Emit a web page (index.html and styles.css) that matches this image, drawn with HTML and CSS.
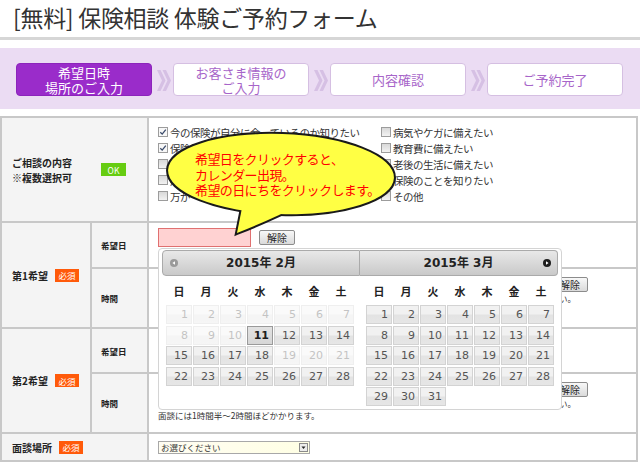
FILE: index.html
```html
<!DOCTYPE html>
<html lang="ja">
<head>
<meta charset="utf-8">
<title>保険相談 体験ご予約フォーム</title>
<link rel="stylesheet" href="styles.css">
</head>
<body>
<div class="page">
  <h1 class="title">[無料] 保険相談 体験ご予約フォーム</h1>

  <nav class="steps">
    <div class="step active">希望日時<br>場所のご入力</div>
    <svg class="arrow" viewBox="0 0 21 33"><path d="M5 7h3.5l5 10.5-5 10.5H5l5-10.5z M10.5 7H14l5 10.5-5 10.5h-3.5l5-10.5z" fill="#d6c0e4"/></svg>
    <div class="step">お客さま情報の<br>ご入力</div>
    <svg class="arrow" viewBox="0 0 21 33"><path d="M5 7h3.5l5 10.5-5 10.5H5l5-10.5z M10.5 7H14l5 10.5-5 10.5h-3.5l5-10.5z" fill="#d6c0e4"/></svg>
    <div class="step">内容確認</div>
    <svg class="arrow" viewBox="0 0 21 33"><path d="M5 7h3.5l5 10.5-5 10.5H5l5-10.5z M10.5 7H14l5 10.5-5 10.5h-3.5l5-10.5z" fill="#d6c0e4"/></svg>
    <div class="step">ご予約完了</div>
  </nav>

  <div class="form">
    <div class="lab wide">
      <div class="lab-text">ご相談の内容<br>※複数選択可</div>
      <span class="badge ok">OK</span>
    </div>
    <div class="cell checks">
      <label class="chk"><span class="box on"><svg viewBox="0 0 8 8"><path d="M1.3 4.2l1.9 1.9L6.8 1.6" fill="none" stroke="#3a4a6a" stroke-width="1.3"/></svg></span>今の保険が自分に合っているのか知りたい</label>
      <label class="chk"><span class="box on"><svg viewBox="0 0 8 8"><path d="M1.3 4.2l1.9 1.9L6.8 1.6" fill="none" stroke="#3a4a6a" stroke-width="1.3"/></svg></span>保険料を節約したい</label>
      <label class="chk"><span class="box"></span>保障内容を見直したい</label>
      <label class="chk"><span class="box"></span>貯蓄について相談したい</label>
      <label class="chk"><span class="box"></span>万が一に備えたい</label>
      <label class="chk"><span class="box"></span>病気やケガに備えたい</label>
      <label class="chk"><span class="box"></span>教育費に備えたい</label>
      <label class="chk"><span class="box"></span>老後の生活に備えたい</label>
      <label class="chk"><span class="box"></span>保険のことを知りたい</label>
      <label class="chk"><span class="box"></span>その他</label>
    </div>

    <div class="lab tall">第1希望<span class="badge req">必須</span></div>
    <div class="sub">希望日</div>
    <div class="cell date">
      <span class="date-input"></span>
      <span class="btn">解除</span>
    </div>
    <div class="sub">時間</div>
    <div class="cell time">
      <div class="time-row">
        <span class="sel"></span><span class="sel"></span><span class="sel"></span><span class="sel"></span>
        <span class="btn push">解除</span>
      </div>
      <div class="note1">※開始時間と終了時間をお選びください。混雑時はご希望に添えない場合がございますのでご了承ください。</div>
    </div>

    <div class="lab tall">第2希望<span class="badge req">必須</span></div>
    <div class="sub">希望日</div>
    <div class="cell date">
      <span class="date-input plain"></span>
    </div>
    <div class="sub">時間</div>
    <div class="cell time">
      <div class="time-row">
        <span class="sel"></span><span class="sel"></span><span class="sel"></span><span class="sel"></span>
        <span class="btn push">解除</span>
      </div>
      <div class="note1">※開始時間と終了時間をお選びください。混雑時はご希望に添えない場合がございますのでご了承ください。</div>
      <div class="note2">面談には1時間半～2時間ほどかかります。</div>
    </div>

    <div class="lab wide">面談場所<span class="badge req">必須</span></div>
    <div class="cell place">
      <span class="select">お選びください<span class="dd"><svg viewBox="0 0 7 7"><path d="M1.5 2.5h4l-2 2.5z" fill="#222"/></svg></span></span>
    </div>
  </div>

  <div class="dp">
    <div class="dp-group g1">
      <div class="dp-head"><span class="nav prev"><svg viewBox="0 0 8 8"><circle cx="4" cy="4" r="4" fill="#9a9a9a"/><path d="M5 2.2v3.6L2.4 4z" fill="#fff"/></svg></span>2015年 2月</div>
      <div class="dp-days"><span>日</span><span>月</span><span>火</span><span>水</span><span>木</span><span>金</span><span>土</span></div>
      <div class="dp-cells">
        <span class="d off">1</span><span class="d off">2</span><span class="d off">3</span><span class="d off">4</span><span class="d off">5</span><span class="d off">6</span><span class="d off">7</span>
        <span class="d off">8</span><span class="d off">9</span><span class="d off">10</span><span class="d today">11</span><span class="d">12</span><span class="d">13</span><span class="d">14</span>
        <span class="d">15</span><span class="d">16</span><span class="d">17</span><span class="d">18</span><span class="d off">19</span><span class="d off">20</span><span class="d off">21</span>
        <span class="d">22</span><span class="d">23</span><span class="d">24</span><span class="d">25</span><span class="d">26</span><span class="d">27</span><span class="d">28</span>
      </div>
    </div>
    <div class="dp-group g2">
      <div class="dp-head">2015年 3月<span class="nav next"><svg viewBox="0 0 8 8"><circle cx="4" cy="4" r="4" fill="#1e1e1e"/><path d="M3 2.2v3.6L5.6 4z" fill="#fff"/></svg></span></div>
      <div class="dp-days"><span>日</span><span>月</span><span>火</span><span>水</span><span>木</span><span>金</span><span>土</span></div>
      <div class="dp-cells">
        <span class="d">1</span><span class="d">2</span><span class="d">3</span><span class="d">4</span><span class="d">5</span><span class="d">6</span><span class="d">7</span>
        <span class="d">8</span><span class="d">9</span><span class="d">10</span><span class="d">11</span><span class="d">12</span><span class="d">13</span><span class="d">14</span>
        <span class="d">15</span><span class="d">16</span><span class="d">17</span><span class="d">18</span><span class="d">19</span><span class="d">20</span><span class="d">21</span>
        <span class="d">22</span><span class="d">23</span><span class="d">24</span><span class="d">25</span><span class="d">26</span><span class="d">27</span><span class="d">28</span>
        <span class="d">29</span><span class="d">30</span><span class="d">31</span>
      </div>
    </div>
  </div>

  <div class="balloon">
    <svg class="balloon-shape" viewBox="0 0 245 110" width="245" height="110">
      <g stroke="#1a1a1a" stroke-width="4" fill="none">
        <ellipse cx="121" cy="46" rx="113" ry="40" transform="rotate(2 121 46)"/>
        <path d="M84 70 L77 105 Q108 93 146 74 Z"/>
      </g>
      <g fill="#ffff44">
        <ellipse cx="121" cy="46" rx="113" ry="40" transform="rotate(2 121 46)"/>
        <path d="M84 70 L77 105 Q108 93 146 74 Z"/>
      </g>
    </svg>
    <p class="balloon-text">希望日をクリックすると、<br>カレンダー出現。<br>希望の日にちをクリックします。</p>
  </div>
</div>
</body>
</html>
```

FILE: styles.css
```css
* { box-sizing: border-box; }
html, body { margin: 0; padding: 0; background: #fff; }
body {
  font-family: "Noto Sans CJK JP", "Noto Sans", sans-serif;
  color: #333;
}
.page { position: relative; width: 640px; height: 470px; overflow: hidden; }

/* title */
.title {
  margin: 0;
  height: 40px;
  padding-left: 13px;
  font-size: 23px;
  font-weight: normal;
  line-height: 35px;
  letter-spacing: -0.3px;
  color: #333;
  border-bottom: 3px solid #d6d6d6;
  white-space: nowrap;
}

/* steps */
.steps {
  margin-top: 8px;
  height: 61px;
  background: #ebdcf3;
  display: flex;
  align-items: flex-start;
  padding: 15px 16px 0;
}
.step {
  width: 136px;
  height: 33px;
  flex: none;
  border: 1px solid #d5bfe2;
  border-radius: 4px;
  background: #fff;
  color: #a765c9;
  font-size: 13px;
  line-height: 15px;
  display: flex;
  align-items: center;
  justify-content: center;
  text-align: center;
}
.step.active { background: #9a2cca; border-color: #8c24bb; color: #fff; }
.arrow { width: 21px; height: 33px; flex: none; }

/* form grid */
.form {
  margin-top: 7px;
  width: 638px;
  display: grid;
  grid-template-columns: 88px 55px 487px;
  grid-template-rows: 103px 44px 58px 43px 58px 26px;
  gap: 2px;
  border: 2px solid #c8c8c8;
  background: #c8c8c8;
}
.lab, .sub {
  background: #f4f4f4;
  display: flex;
  align-items: center;
  color: #222;
  font-weight: bold;
}
.lab { padding-left: 10px; font-size: 10px; }
.lab.wide { grid-column: 1 / 3; }
.lab.tall { grid-row: span 2; }
.lab-text { width: 89px; line-height: 15px; }
.sub { padding-left: 9px; font-size: 8.5px; }
.cell { background: #fff; padding: 5px 9px; min-width: 0; }

.badge {
  display: inline-flex;
  align-items: center;
  justify-content: center;
  height: 13px;
  color: #fff;
  font-size: 8.5px;
  font-weight: normal;
}
.badge.ok { width: 25px; background: #66cc11; }
.badge.req { width: 24px; background: #ff5a0a; margin-left: 7px; }

/* checkboxes */
.checks {
  display: grid;
  grid-template-columns: 223px 1fr;
  grid-template-rows: repeat(5, 16px);
  grid-auto-flow: column;
  padding-top: 6px;
}
.chk {
  display: flex;
  align-items: center;
  font-size: 10.5px;
  letter-spacing: -0.5px;
  color: #333;
  white-space: nowrap;
}
.box {
  width: 10px;
  height: 10px;
  flex: none;
  margin-right: 2px;
  border: 1px solid #9c9c9c;
  background: linear-gradient(#d8d8d8, #f2f2f2);
  display: flex;
}
.box.on { background: #f7f7f7; }
.box svg { width: 8px; height: 8px; }

/* date row */
.date { display: flex; align-items: flex-start; padding-top: 5px; }
.date-input {
  width: 93px;
  height: 19px;
  border: 1px solid #e07070;
  background: #ffd2d2;
}
.date-input.plain { border-color: #aaa; background: #fff; }
.btn {
  width: 36px;
  height: 15px;
  margin-left: 8px;
  margin-top: 2px;
  border: 1px solid #8c8c8c;
  border-radius: 2px;
  background: linear-gradient(#f8f8f8, #dadada);
  font-size: 10px;
  line-height: 13px;
  color: #222;
  text-align: center;
  flex: none;
}

/* time cell */
.time { padding-top: 8px; }
.time-row {
  width: 430px;
  height: 15px;
  display: flex;
  align-items: center;
  gap: 12px;
}
.sel { width: 40px; height: 14px; border: 1px solid #aaa; background: #fff; }
.time-row .btn { margin-top: 0; }
.btn.push { margin-left: auto; }
.note1 {
  width: 418px;
  height: 12px;
  overflow: hidden;
  white-space: nowrap;
  text-align: right;
  font-size: 8.5px;
  line-height: 12px;
  color: #333;
}
.note2 { font-size: 8.5px; line-height: 12px; color: #333; white-space: nowrap; }

/* place */
.place { display: flex; align-items: center; padding-top: 0; padding-bottom: 0; }
.select {
  position: relative;
  width: 152px;
  height: 13px;
  border: 1px solid #a8a8a8;
  background: linear-gradient(90deg, #fffdf2, #ffffe4);
  font-size: 8.5px;
  line-height: 11px;
  padding-left: 2px;
  color: #333;
}
.dd {
  position: absolute;
  right: 1px;
  top: 1px;
  width: 9px;
  height: 9px;
  border: 1px solid #8a8a8a;
  background: #ececec;
  display: flex;
}
.dd svg { width: 7px; height: 7px; }

/* datepicker */
.dp {
  position: absolute;
  left: 158px;
  top: 248px;
  width: 404px;
  height: 162px;
  border: 1px solid #d4d4d4;
  border-radius: 4px;
  background: #fff;
  padding: 1px 3px;
  display: flex;
  z-index: 2;
}
.dp-group { width: 198px; flex: none; }
.dp-head {
  position: relative;
  height: 26px;
  border: 1px solid #aaa;
  background: linear-gradient(#e8e8e8, #c9c9c9);
  font: bold 12px/24px "DejaVu Sans", "Noto Sans CJK JP", sans-serif;
  color: #222;
  text-align: center;
}
.g1 .dp-head { border-radius: 4px 0 0 4px; }
.g2 .dp-head { border-radius: 0 4px 4px 0; border-left: none; }
.nav { position: absolute; top: 8px; width: 8px; height: 8px; display: flex; }
.nav svg { width: 8px; height: 8px; }
.prev { left: 7px; }
.next { right: 6px; }
.dp-days, .dp-cells {
  display: grid;
  grid-template-columns: repeat(7, 26px);
  column-gap: 1px;
}
.g1 .dp-days, .g1 .dp-cells { padding-left: 4px; }
.g2 .dp-days, .g2 .dp-cells { padding-left: 6px; }
.dp-days {
  height: 29px;
  align-items: center;
  text-align: center;
  font-size: 11px;
  font-weight: bold;
  color: #222;
}
.dp-cells { grid-auto-rows: 19px; row-gap: 1.5px; }
.d {
  border: 1px solid #d3d3d3;
  background: linear-gradient(#f1f1f1 0, #f1f1f1 45%, #e3e3e3 55%, #e6e6e6 100%);
  font: 11px/17px "DejaVu Sans", sans-serif;
  color: #555;
  text-align: right;
  padding-right: 3px;
}
.d.off { opacity: 0.35; }
.d.today { border-color: #9a9a9a; background: linear-gradient(#e2e2e2, #d6d6d6); color: #1e1e1e; font-weight: bold; }

/* balloon */
.balloon { position: absolute; left: 160px; top: 128px; width: 245px; height: 110px; z-index: 3; }
.balloon-shape { display: block; }
.balloon-text {
  position: absolute;
  left: 35px;
  top: 23px;
  margin: 0;
  font-size: 13px;
  line-height: 15.5px;
  letter-spacing: -0.6px;
  color: #ff0000;
  white-space: nowrap;
}
```
